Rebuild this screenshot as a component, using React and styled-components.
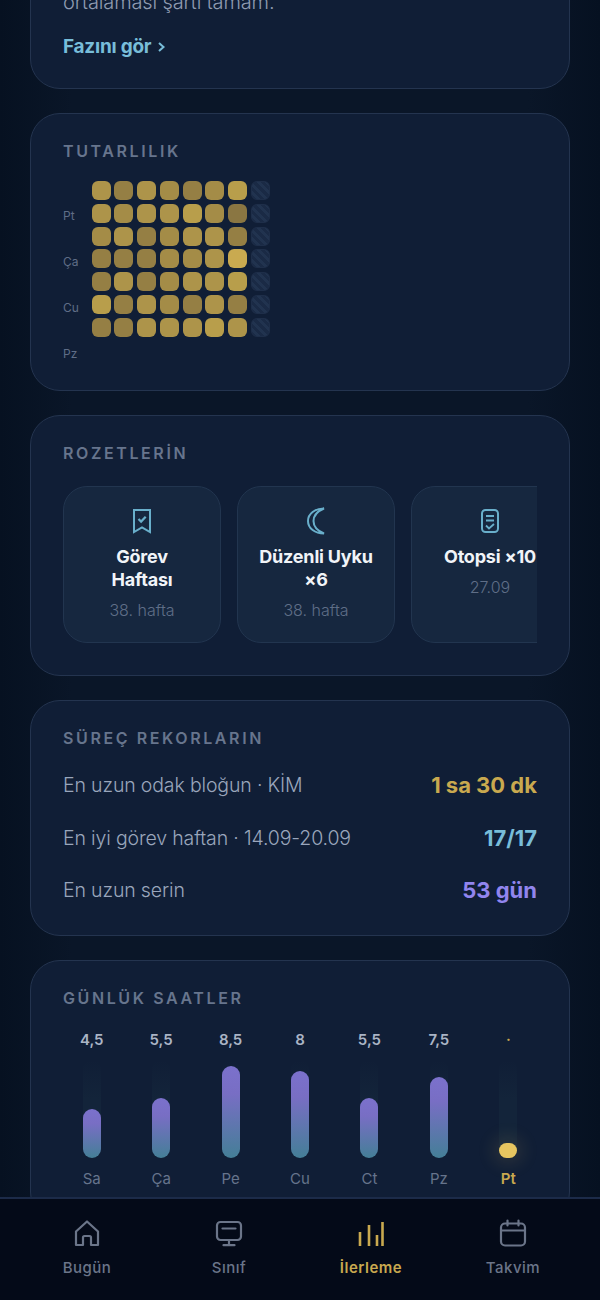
import React from "react";
import styled, { createGlobalStyle } from "styled-components";

const heat = [
  [3, 1, 3, 2, 1, 2, 4],
  [3, 2, 3, 3, 4, 2, 0],
  [2, 3, 1, 2, 3, 3, 1],
  [1, 1, 1, 2, 2, 3, 5],
  [1, 3, 1, 2, 3, 3, 4],
  [4, 1, 3, 2, 1, 3, 1],
  [1, 1, 3, 3, 3, 4, 3],
];
const heatLabels = ["", "Pt", "", "Ça", "", "Cu", "", "Pz"];

const records = [
  { label: "En uzun odak bloğun · KİM", value: "1 sa 30 dk", color: "#c9a94f" },
  { label: "En iyi görev haftan · 14.09-20.09", value: "17/17", color: "#78bdd9" },
  { label: "En uzun serin", value: "53 gün", color: "#9185ee" },
];

const days = [
  { day: "Sa", value: "4,5", height: 49 },
  { day: "Ça", value: "5,5", height: 60 },
  { day: "Pe", value: "8,5", height: 92 },
  { day: "Cu", value: "8", height: 87 },
  { day: "Ct", value: "5,5", height: 60 },
  { day: "Pz", value: "7,5", height: 81 },
  { day: "Pt", value: "·", height: 15, today: true },
];

const BookmarkIcon = () => (
  <svg width="20" height="26" viewBox="0 0 20 26" fill="none" stroke="#69afcb" strokeWidth="2">
    <path d="M2 2h16v22l-8-4.500L2 24z" />
    <path d="M6.500 11l2.600 2.600 4.600-4.800" strokeWidth="2.200" />
  </svg>
);

const MoonIcon = () => (
  <svg width="20" height="28" viewBox="0 0 20 28" fill="none" stroke="#69afcb" strokeWidth="2">
    <path d="M18 1.500C9 1.500 2 6.500 2 14s7 12.500 16 12.500C12 24 7.500 20 7.500 14S12 4 18 1.500z" />
  </svg>
);

const ReportIcon = () => (
  <svg width="20" height="26" viewBox="0 0 20 26" fill="none" stroke="#69afcb" strokeWidth="2">
    <rect x="2" y="2" width="16" height="22" rx="3.500" />
    <path d="M6 8h8M6 12.500h8M6 17.500l3 3 5-4.500" strokeWidth="1.800" />
  </svg>
);

const HomeIcon = () => (
  <svg width="26" height="28" viewBox="0 0 26 28" fill="none" stroke="currentColor" strokeWidth="2.200" strokeLinejoin="round">
    <path d="M2 12.500L13 2.500l11 10V26h-7v-7.500a1.500 1.500 0 0 0-1.500-1.500h-5A1.500 1.500 0 0 0 9 18.500V26H2z" />
  </svg>
);

const MonitorIcon = () => (
  <svg width="28" height="27" viewBox="0 0 28 27" fill="none" stroke="currentColor" strokeWidth="2.200" strokeLinecap="round">
    <rect x="2" y="2" width="24" height="18" rx="3.500" />
    <path d="M7.500 8.500h13M14 20v5M8.500 25.200h11" />
  </svg>
);

const BarsIcon = () => (
  <svg width="28" height="27" viewBox="0 0 28 27" fill="none" stroke="currentColor" strokeWidth="2.600">
    <path d="M3 12v14M12 5v21M20 15v11M25.500 2v24" />
  </svg>
);

const CalendarIcon = () => (
  <svg width="28" height="28" viewBox="0 0 28 28" fill="none" stroke="currentColor" strokeWidth="2.200" strokeLinecap="round">
    <rect x="2" y="4.500" width="24" height="22" rx="4" />
    <path d="M2 11.500h24M8.500 1.500v5M19.500 1.500v5" />
  </svg>
);

const badges = [
  { icon: <BookmarkIcon />, title: "Görev\nHaftası", sub: "38. hafta" },
  { icon: <MoonIcon />, title: "Düzenli Uyku\n×6", sub: "38. hafta" },
  { icon: <ReportIcon />, title: "Otopsi ×10", sub: "27.09" },
];

const tabs = [
  { icon: <HomeIcon />, label: "Bugün" },
  { icon: <MonitorIcon />, label: "Sınıf" },
  { icon: <BarsIcon />, label: "İlerleme", active: true },
  { icon: <CalendarIcon />, label: "Takvim" },
];

export default function App() {
  return (
    <>
      <GlobalStyle />
      <Screen>
        <Scroller>
          <Content>
            <Card $pad="31px 32px 29px">
              <BodyText>ortalaması şartı tamam.</BodyText>
              <PhaseLink>
                Fazını gör
                <svg width="9" height="12" viewBox="0 0 9 12" fill="none" stroke="#78bdd9" strokeWidth="2">
                  <path d="M2 2l4.500 4L2 10" />
                </svg>
              </PhaseLink>
            </Card>

            <Card $pad="25px 32px 25px">
              <SectionTitle $mb="18px">TUTARLILIK</SectionTitle>
              <HeatWrap>
                <HeatLabels>
                  {heatLabels.map((label, i) => (
                    <HeatLabel key={i}>{label}</HeatLabel>
                  ))}
                </HeatLabels>
                <HeatGrid>
                  {heat.map((row, r) => (
                    <React.Fragment key={r}>
                      {row.map((level, c) => (
                        <HeatCell key={c} $level={level} />
                      ))}
                      <FutureCell />
                    </React.Fragment>
                  ))}
                </HeatGrid>
              </HeatWrap>
            </Card>

            <Card $pad="25px 32px 32px">
              <SectionTitle $mb="21px">ROZETLERİN</SectionTitle>
              <BadgeRow>
                {badges.map((badge) => (
                  <Badge key={badge.title}>
                    <BadgeIcon>{badge.icon}</BadgeIcon>
                    <BadgeTitle>{badge.title}</BadgeTitle>
                    <BadgeSub>{badge.sub}</BadgeSub>
                  </Badge>
                ))}
              </BadgeRow>
            </Card>

            <Card $pad="25px 32px 18px">
              <SectionTitle $mb="9px">SÜREÇ REKORLARIN</SectionTitle>
              {records.map((rec) => (
                <RecordRow key={rec.label}>
                  <RecordLabel>{rec.label}</RecordLabel>
                  <RecordValue $color={rec.color}>{rec.value}</RecordValue>
                </RecordRow>
              ))}
            </Card>

            <Card $pad="25px 32px 32px">
              <SectionTitle $mb="20px">GÜNLÜK SAATLER</SectionTitle>
              <Chart>
                {days.map((d) => (
                  <DayCol key={d.day}>
                    <DayValue $today={d.today}>{d.value}</DayValue>
                    <Track>
                      <Bar $today={d.today} style={{ height: d.height }} />
                    </Track>
                    <DayName $today={d.today}>{d.day}</DayName>
                  </DayCol>
                ))}
              </Chart>
            </Card>
          </Content>
        </Scroller>

        <TabBar>
          {tabs.map((tab) => (
            <Tab key={tab.label} $active={tab.active}>
              <TabIcon>{tab.icon}</TabIcon>
              <TabLabel $active={tab.active}>{tab.label}</TabLabel>
            </Tab>
          ))}
        </TabBar>
      </Screen>
    </>
  );
}

const GlobalStyle = createGlobalStyle`
  html, body {
    margin: 0;
    padding: 0;
    background: #040a18;
  }
  * {
    box-sizing: border-box;
  }
`;

const Screen = styled.div`
  width: 600px;
  height: 1300px;
  display: flex;
  flex-direction: column;
  overflow: hidden;
  font-family: Inter, "Noto Sans", "Liberation Sans", sans-serif;
  background: linear-gradient(90deg, #061121 0%, #0a1628 12%, #0a1628 88%, #061121 100%);
`;

const Scroller = styled.div`
  flex: 1;
  min-height: 0;
  overflow: hidden;
`;

const Content = styled.div`
  display: flex;
  flex-direction: column;
  gap: 24px;
  margin-top: -44px;
  padding: 0 30px;
`;

const Card = styled.section`
  padding: ${(p) => p.$pad};
  background: #101e36;
  border: 1px solid #24344f;
  border-radius: 30px;
`;

const SectionTitle = styled.h2`
  margin: 0 0 ${(p) => p.$mb};
  font-size: 16px;
  line-height: 24px;
  font-weight: 600;
  letter-spacing: 2.600px;
  color: #67758d;
`;

const BodyText = styled.p`
  margin: 0;
  font-size: 20px;
  line-height: 28px;
  font-weight: 300;
  color: #8e9ab0;
  letter-spacing: -0.150px;
`;

const PhaseLink = styled.div`
  display: flex;
  align-items: center;
  gap: 6px;
  margin-top: 19px;
  font-size: 19px;
  line-height: 24px;
  font-weight: 700;
  color: #78bdd9;
  letter-spacing: -0.250px;
`;

const HeatWrap = styled.div`
  display: flex;
`;

const HeatLabels = styled.div`
  display: flex;
  flex-direction: column;
  width: 28.500px;
`;

const HeatLabel = styled.div`
  height: 23px;
  font-size: 12px;
  line-height: 23px;
  color: #5f6d86;
`;

const HeatGrid = styled.div`
  display: grid;
  grid-template-columns: repeat(8, 19px);
  grid-auto-rows: 19px;
  gap: 3.800px;
`;

const HeatCell = styled.div`
  border-radius: 6px;
  background: ${(p) => ["#8a7642", "#957f44", "#a48c47", "#ad944a", "#b89e4b", "#c9aa50"][p.$level]};
`;

const FutureCell = styled.div`
  border-radius: 6px;
  border: 1px solid #1e2e49;
  background: repeating-linear-gradient(45deg, #1a2a45 0 3px, #21334f 3px 6px);
`;

const BadgeRow = styled.div`
  display: flex;
  gap: 16px;
  overflow: hidden;
`;

const Badge = styled.div`
  flex: 0 0 158px;
  height: 157px;
  padding: 20px 10px 0;
  display: flex;
  flex-direction: column;
  align-items: center;
  text-align: center;
  background: #16273f;
  border: 1px solid #22354f;
  border-radius: 24px;
`;

const BadgeIcon = styled.div`
  height: 28px;
  display: flex;
  align-items: center;
  justify-content: center;
`;

const BadgeTitle = styled.div`
  margin-top: 10px;
  font-size: 18px;
  line-height: 23px;
  font-weight: 700;
  color: #f1f4f8;
  letter-spacing: -0.200px;
  white-space: pre-line;
`;

const BadgeSub = styled.div`
  margin-top: 8px;
  font-size: 16px;
  line-height: 22px;
  font-weight: 300;
  color: #5f6e87;
`;

const RecordRow = styled.div`
  display: flex;
  align-items: center;
  justify-content: space-between;
  height: 52.500px;
`;

const RecordLabel = styled.span`
  font-size: 19.500px;
  font-weight: 300;
  color: #9aa6bc;
  letter-spacing: -0.150px;
`;

const RecordValue = styled.span`
  font-size: 22px;
  font-weight: 700;
  color: ${(p) => p.$color};
`;

const Chart = styled.div`
  display: grid;
  grid-template-columns: repeat(7, 1fr);
  gap: 12px;
`;

const DayCol = styled.div`
  display: flex;
  flex-direction: column;
  align-items: center;
`;

const DayValue = styled.div`
  height: 20px;
  font-size: 15px;
  line-height: 20px;
  font-weight: 600;
  color: ${(p) => (p.$today ? "#c9a94f" : "#aab4c5")};
`;

const Track = styled.div`
  display: flex;
  align-items: flex-end;
  justify-content: center;
  width: 18px;
  height: 98px;
  margin-top: 10px;
  border-radius: 9px;
  background: linear-gradient(180deg, #101e36 0%, #13243a 40%, #13243a 100%);
`;

const Bar = styled.div`
  width: 18px;
  border-radius: 9px;
  background: ${(p) =>
    p.$today
      ? "#e6c560"
      : "linear-gradient(180deg, #7b71cc 0%, #786ec4 30%, #447f97 100%)"};
  box-shadow: ${(p) => (p.$today ? "0 0 18px 6px rgba(230, 197, 96, 0.12)" : "none")};
`;

const DayName = styled.div`
  margin-top: 11px;
  font-size: 15px;
  line-height: 20px;
  font-weight: ${(p) => (p.$today ? 600 : 400)};
  color: ${(p) => (p.$today ? "#c9a94f" : "#66748c")};
`;

const TabBar = styled.nav`
  flex: 0 0 103px;
  display: grid;
  grid-template-columns: repeat(4, 1fr);
  padding: 0 16px;
  background: #040a18;
  border-top: 2px solid #1c2b49;
`;

const Tab = styled.div`
  display: flex;
  flex-direction: column;
  align-items: center;
  padding-top: 20px;
  color: ${(p) => (p.$active ? "#c9a94f" : "#6b7589")};
`;

const TabIcon = styled.div`
  height: 28px;
  display: flex;
  align-items: center;
  justify-content: center;
`;

const TabLabel = styled.div`
  margin-top: 11px;
  font-size: 15px;
  line-height: 20px;
  font-weight: ${(p) => (p.$active ? 600 : 500)};
  letter-spacing: 0.500px;
`;
